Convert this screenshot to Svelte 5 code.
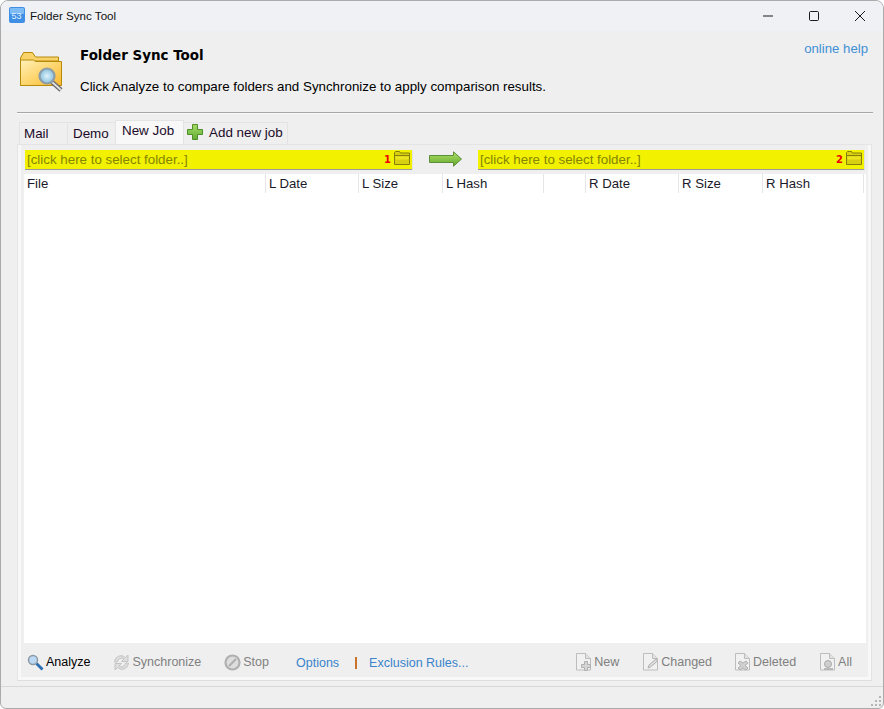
<script>
  const leftCols = [
    { label: 'File', width: 242 },
    { label: 'L Date', width: 93 },
    { label: 'L Size', width: 84 },
    { label: 'L Hash', width: 101 },
    { label: '', width: 42 },
    { label: 'R Date', width: 93 },
    { label: 'R Size', width: 84 },
    { label: 'R Hash', width: 101 }
  ];
</script>

{#snippet folderIcon()}
  <svg class="pick" width="16" height="14" viewBox="0 0 16 14">
    <path d="M.5 13.500V1.500l1-1h4l1 1.500h9v11.500z" fill="#d8cf10" stroke="#85800c" />
    <path d="M1 4.500h14" stroke="#85800c" />
    <path d="M1.500 5.500h13v3h-13z" fill="#ece420" />
  </svg>
{/snippet}

{#snippet docIcon()}
  <path d="M.5.5h9l5 5v11.500h-14z" fill="#f1f1f1" stroke="#bdbdbd" />
  <path d="M9.500.5v5h5" fill="#e2e2e2" stroke="#bdbdbd" />
{/snippet}

<div class="window">
  <div class="titlebar">
    <svg class="appicon" width="16" height="16" viewBox="0 0 16 16">
      <rect width="16" height="16" rx="2" fill="#3f8fe6" />
      <rect x="1" y="1" width="14" height="6" rx="1" fill="#7fbcf5" />
      <text x="2.500" y="12" font-size="9" font-family="Liberation Sans" fill="#e4f2ff">53</text>
    </svg>
    <span class="wintitle">Folder Sync Tool</span>
    <div class="controls">
      <svg width="46" height="30" viewBox="0 0 46 30"><path d="M18 15h10" stroke="#1a1a1a" /></svg>
      <svg width="46" height="30" viewBox="0 0 46 30"><rect x="18.500" y="10.500" width="9" height="9" rx="1" fill="none" stroke="#1a1a1a" /></svg>
      <svg width="46" height="30" viewBox="0 0 46 30"><path d="M18 10l10 10M28 10l-10 10" stroke="#1a1a1a" /></svg>
    </div>
  </div>

  <div class="body">
    <header class="head">
      <svg class="bigicon" width="44" height="40" viewBox="0 0 44 40">
        <defs>
          <linearGradient id="fold" x1="0" y1="0" x2="1" y2="1">
            <stop offset="0" stop-color="#fff0b8" />
            <stop offset=".5" stop-color="#fdd670" />
            <stop offset="1" stop-color="#f9b92e" />
          </linearGradient>
          <radialGradient id="lens">
            <stop offset="0" stop-color="#dff3fc" />
            <stop offset="1" stop-color="#86bfdc" />
          </radialGradient>
        </defs>
        <path d="M.5 33.500V6l3-5.500h9l3 4.500h23v4H.5z" fill="#f9d36a" stroke="#b58a08" />
        <path d="M.5 33.500V8h13l2 1.500h26v24z" fill="url(#fold)" stroke="#b58a08" />
        <path d="M32 30l9 8" stroke="#6b6b6b" stroke-width="4.500" />
        <path d="M32 30l9 8" stroke="#e2e2e2" stroke-width="1.800" />
        <circle cx="27" cy="24" r="7.500" fill="url(#lens)" stroke="#8d9ca6" stroke-width="2.200" />
      </svg>
      <div class="headtext">
        <h1>Folder Sync Tool</h1>
        <p>Click Analyze to compare folders and Synchronize to apply comparison results.</p>
      </div>
      <span class="help">online help</span>
    </header>
    <div class="divider"></div>

    <nav class="tabs">
      <span class="tab">Mail</span>
      <span class="tab">Demo</span>
      <span class="tab active">New Job</span>
      <span class="tab add">
        <svg width="16" height="16" viewBox="0 0 16 16">
          <defs>
            <linearGradient id="plus" x1="0" y1="0" x2="0" y2="1">
              <stop offset="0" stop-color="#a6dc68" />
              <stop offset="1" stop-color="#62ad34" />
            </linearGradient>
          </defs>
          <path d="M5.500.5h5v5h5v5h-5v5h-5v-5h-5v-5h5z" fill="url(#plus)" stroke="#4f8f2a" />
        </svg>
        Add new job
      </span>
    </nav>

    <section class="panel">
      <div class="inner">
        <div class="folders">
          <div class="folder left">
            <span class="ftext">[click here to select folder..]</span>
            <b>1</b>
            {@render folderIcon()}
          </div>
          <svg class="arrow" width="33" height="16" viewBox="0 0 33 16">
            <defs>
              <linearGradient id="arr" x1="0" y1="0" x2="0" y2="1">
                <stop offset="0" stop-color="#b4e06a" />
                <stop offset="1" stop-color="#5fa82a" />
              </linearGradient>
            </defs>
            <path d="M.5 4.500h24V.8L32.500 8l-8 7.200v-3.700H.5z" fill="url(#arr)" stroke="#5b8f3a" />
          </svg>
          <div class="folder right">
            <span class="ftext">[click here to select folder..]</span>
            <b>2</b>
            {@render folderIcon()}
          </div>
        </div>

        <div class="table">
          <div class="thead">
            {#each leftCols as col}
              <span class="th" style="width: {col.width}px">{col.label}</span>
            {/each}
          </div>
        </div>

        <footer class="toolbar">
          <span class="btn first">
            <svg width="17" height="17" viewBox="0 0 17 17">
              <path d="M9.500 9.500l6 6" stroke="#2a6db0" stroke-width="2.800" />
              <circle cx="6" cy="6" r="4.500" fill="#bcd8f5" stroke="#8a9aa5" stroke-width="1.500" />
            </svg>
            <span class="on">Analyze</span>
          </span>
          <span class="btn sync">
            <svg width="17" height="17" viewBox="0 0 17 17">
              <path d="M1.500 8A6.500 6.500 0 0 1 12.500 3.500L15 1v6.500H8.500L11 5A4 4 0 0 0 4.500 8zM15.500 9A6.500 6.500 0 0 1 4.500 13.500L2 16V9.500h6.500L6 12a4 4 0 0 0 6.500-3z" fill="#dedede" stroke="#bcbcbc" stroke-width=".8" />
            </svg>
            Synchronize
          </span>
          <span class="btn stop">
            <svg width="17" height="17" viewBox="0 0 17 17">
              <circle cx="8.500" cy="8.500" r="7" fill="#ddd" stroke="#b0b0b0" stroke-width="2.200" />
              <path d="M5 12l7-7" stroke="#b0b0b0" stroke-width="2.200" />
            </svg>
            Stop
          </span>
          <a class="link options" href="#options">Options</a>
          <span class="sep"></span>
          <a class="link" href="#rules">Exclusion Rules...</a>
          <span class="spacer"></span>
          <span class="btn new">
            <svg width="16" height="18" viewBox="0 0 16 18">
              {@render docIcon()}
              <path d="M8.500 8.500h3v3h3v3h-3v3h-3v-3h-3v-3h3z" fill="#d5d5d5" stroke="#b0b0b0" />
            </svg>
            New
          </span>
          <span class="btn changed">
            <svg width="16" height="18" viewBox="0 0 16 18">
              {@render docIcon()}
              <path d="M5 15l1-3 7-6 1.500 2-7 6z" fill="#ddd" stroke="#b0b0b0" />
            </svg>
            Changed
          </span>
          <span class="btn deleted">
            <svg width="16" height="18" viewBox="0 0 16 18">
              {@render docIcon()}
              <path d="M5 8l3 2 3-2 2 2-3 2.500 3 2.500-2 2-3-2-3 2-2-2 3-2.500-3-2.500z" fill="#cfcfcf" stroke="#b0b0b0" />
            </svg>
            Deleted
          </span>
          <span class="btn all">
            <svg width="16" height="18" viewBox="0 0 16 18">
              {@render docIcon()}
              <circle cx="8" cy="11" r="3.500" fill="#cfcfcf" stroke="#aaa" />
              <path d="M4 16h9" stroke="#aaa" stroke-width="1.500" />
            </svg>
            All
          </span>
        </footer>
      </div>
    </section>

    <div class="status">
      <svg class="grip" width="12" height="12" viewBox="0 0 12 12" fill="#b5b5b5">
        <rect x="9" y="1" width="2" height="2" />
        <rect x="5" y="5" width="2" height="2" /><rect x="9" y="5" width="2" height="2" />
        <rect x="1" y="9" width="2" height="2" /><rect x="5" y="9" width="2" height="2" /><rect x="9" y="9" width="2" height="2" />
      </svg>
    </div>
  </div>
</div>

<style>
  :global(body) {
    margin: 0;
    background: #fff;
    font-family: "Liberation Sans", Arial, sans-serif;
  }
  .window {
    width: 884px;
    height: 709px;
    box-sizing: border-box;
    border: 1px solid #ababab;
    border-radius: 8px 8px 6px 6px;
    overflow: hidden;
    display: flex;
    flex-direction: column;
    background: #efefef;
    color: #000;
    font-size: 13px;
  }
  .titlebar {
    height: 30px;
    flex: none;
    display: flex;
    align-items: center;
    background: #f0f1f5;
    padding-left: 8px;
  }
  .appicon { margin-right: 5px; margin-top: -2px; }
  .wintitle { font-size: 11.600px; color: #111; margin-top: -2px; }
  .controls { margin-left: auto; display: flex; }
  .controls svg { display: block; }
  .body { flex: 1; display: flex; flex-direction: column; min-height: 0; }
  .head {
    height: 81px;
    flex: none;
    display: flex;
    box-sizing: border-box;
    padding: 16px 15px 0 19px;
  }
  .bigicon { margin-top: 5px; margin-right: 16px; flex: none; }
  .headtext { flex: 1; }
  h1 {
    margin: 0;
    font-family: "DejaVu Sans", sans-serif;
    font-size: 13.450px;
    line-height: 18px;
    font-weight: bold;
  }
  p { margin: 14px 0 0; font-size: 13.330px; line-height: 16px; }
  .help { color: #3f8fd6; font-size: 13.200px; margin-top: -6px; line-height: 16px; }
  .divider {
    height: 1px;
    flex: none;
    margin: 0 10px 0 16px;
    background: #a6a6a6;
    box-shadow: 0 1px 0 #fafafa;
  }
  .tabs {
    display: flex;
    align-items: flex-end;
    height: 32px;
    flex: none;
    padding-left: 18px;
    margin-top: -1px;
    font-size: 13.400px;
  }
  .tab {
    box-sizing: border-box;
    height: 22px;
    padding: 3px 0 0 6px;
    border: 1px solid #e4e4e4;
    border-bottom: 0;
    background: #efefef;
    color: #1a0a2a;
    margin-right: -1px;
  }
  .tab:nth-child(1) { width: 49px; padding-left: 4px; }
  .tab:nth-child(2) { width: 49px; padding-left: 5px; }
  .active {
    width: 69px;
    height: 24px;
    padding-top: 2px;
    background: #f8f8f8;
    position: relative;
    z-index: 1;
  }
  .add {
    width: 105px;
    display: flex;
    align-items: flex-start;
    gap: 6px;
    padding-top: 1px;
    padding-left: 3px;
    line-height: 17px;
  }
  .panel {
    flex: none;
    height: 537px;
    margin: 0 11px 0 16px;
    box-sizing: border-box;
    border: 1px solid #e4e4e4;
    border-bottom-color: #dedede;
    background: #f8f8f8;
    padding: 0 3px 3px 3px;
  }
  .inner {
    height: 100%;
    background: #efefef;
    display: flex;
    flex-direction: column;
    padding: 5px 0 0 3px;
    box-sizing: border-box;
  }
  .folders {
    display: flex;
    align-items: center;
    height: 20px;
    flex: none;
    padding-left: 1px;
    padding-right: 3px;
  }
  .folder {
    box-sizing: border-box;
    height: 20px;
    display: flex;
    align-items: center;
    background: #f1f100;
    border-bottom: 1px solid #9b9b9b;
    box-shadow: 1px 0 0 #e2e2e2;
    padding: 0 2px 0 2px;
    color: #858500;
    font-size: 13.330px;
  }
  .left { width: 387px; }
  .right { width: 386px; }
  .ftext { flex: 1; }
  .folder b {
    color: #f00000;
    font-family: "DejaVu Sans", sans-serif;
    font-size: 10px;
    margin-right: 3px;
  }
  .pick { margin-top: -3px; }
  .arrow { margin: -2px 16px 0 17px; flex: none; }
  .table {
    flex: 1;
    margin-top: 4px;
    background: #fff;
    margin-right: 2px;
    min-height: 0;
  }
  .thead { display: flex; height: 19px; }
  .th {
    box-sizing: border-box;
    padding: 1px 0 0 3px;
    border-right: 1px solid #e6e6e6;
    font-size: 13.200px;
    line-height: 17px;
    color: #1a1a2a;
  }
  .toolbar {
    height: 34px;
    flex: none;
    display: flex;
    align-items: center;
    padding: 4px 16px 0 3px;
    color: #808080;
    font-size: 12.500px;
    box-sizing: border-box;
  }
  .btn { display: flex; align-items: center; gap: 2px; }
  .btn svg { flex: none; }
  .on { color: #000; }
  .sync { margin-left: 23px; }
  .stop { margin-left: 23px; }
  .link { color: #3a84cc; text-decoration: none; margin-top: 2px; }
  .options { margin-left: 27px; }
  .sep { width: 2px; height: 12px; background: #c9722a; margin: 2px 12px 0 16px; }
  .spacer { flex: 1; }
  .changed { margin-left: 24px; }
  .deleted { margin-left: 23px; }
  .all { margin-left: 24px; }
  .status {
    flex: 1;
    margin-top: 5px;
    border-top: 1px solid #d8d8d8;
    position: relative;
  }
  .grip { position: absolute; right: 1px; bottom: 1px; }
</style>
